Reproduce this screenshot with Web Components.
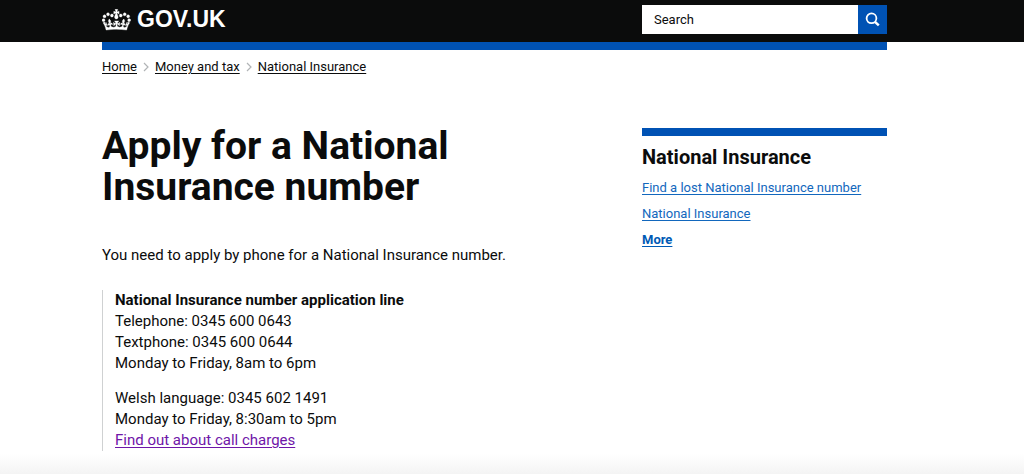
<!DOCTYPE html>
<html lang="en">
<head>
    <meta charset="UTF-8">
    <meta name="viewport" content="width=device-width, initial-scale=1.0">
    <title>Apply for a National Insurance number - GOV.UK</title>
    <style>
        body {
            margin: 0;
            color: #0b0c0c;
            background-color: #fff;
            font-family: Roboto, "Liberation Sans", sans-serif;
            --brand: #0052b4;
            --gutter-left: 102px;
            --gutter-right: 137px;
        }
    </style>
</head>
<body>
<govuk-page></govuk-page>
<script>
    class SiteSearch extends HTMLElement {
        constructor() {
            super();
            const shadow = this.attachShadow({ mode: 'open' });
            shadow.innerHTML = `
                <style>
                    :host { display: block; }
                    form { display: flex; height: 29px; }
                    input {
                        flex: 1;
                        min-width: 0;
                        box-sizing: border-box;
                        margin: 0;
                        padding: 0 12px;
                        border: 0;
                        border-radius: 0;
                        background-color: #fff;
                        color: #0b0c0c;
                        font: 13px Roboto, sans-serif;
                    }
                    input::placeholder { color: #0b0c0c; opacity: 1; }
                    button {
                        display: flex;
                        align-items: center;
                        justify-content: center;
                        width: 29px;
                        padding: 0;
                        border: 0;
                        background-color: var(--brand);
                        cursor: pointer;
                    }
                </style>
                <form role="search">
                    <input type="text" name="q" placeholder="Search" aria-label="Search">
                    <button type="submit" aria-label="Search GOV.UK">
                        <svg width="15" height="15" viewBox="0 0 15 15" fill="none" stroke="#fff">
                            <circle cx="6.5" cy="6.3" r="4.9" stroke-width="1.8"/>
                            <path d="M10 9.8 13.8 13.4" stroke-width="2.4"/>
                        </svg>
                    </button>
                </form>
            `;
        }
    }

    class SiteHeader extends HTMLElement {
        constructor() {
            super();
            const shadow = this.attachShadow({ mode: 'open' });
            shadow.innerHTML = `
                <style>
                    :host { display: block; }
                    header {
                        background-color: #0b0c0c;
                        padding: 5px var(--gutter-right) 8px var(--gutter-left);
                    }
                    .inner {
                        display: grid;
                        grid-template-columns: repeat(3, 1fr);
                        column-gap: 25px;
                        align-items: center;
                    }
                    a {
                        grid-column: span 2;
                        display: flex;
                        align-items: center;
                        gap: 6px;
                        color: #fff;
                        text-decoration: none;
                        font: bold 23px/29px "Liberation Sans", Arial, sans-serif;
                    }
                    .bar {
                        height: 8px;
                        margin: 0 var(--gutter-right) 0 var(--gutter-left);
                        background-color: var(--brand);
                    }
                </style>
                <header>
                    <div class="inner">
                        <a href="#">
                            <svg width="29" height="22" viewBox="0 4 36 27" fill="#fff" stroke="#fff" stroke-width=".4" aria-hidden="true">
                                <path d="M6.7 12.2c1 .4 2.1-.1 2.5-1s-.1-2.1-1-2.5c-1-.4-2.1.1-2.5 1-.4 1 0 2.1 1 2.5m-4.3 2.5c1 .4 2.1-.1 2.5-1s-.1-2.1-1-2.5c-1-.4-2.1.1-2.5 1-.5 1 0 2.1 1 2.5m-1.3 4.8c1 .4 2.1-.1 2.5-1 .4-1-.1-2.1-1-2.5-1-.4-2.1.1-2.5 1-.4 1 0 2.1 1 2.5m10.4-5.8c1 .4 2.1-.1 2.5-1s-.1-2.1-1-2.5c-1-.4-2.1.1-2.5 1s0 2.1 1 2.5m17.4-1.5c-1 .4-2.1-.1-2.5-1s.1-2.1 1-2.5c1-.4 2.1.1 2.5 1 .5 1 0 2.1-1 2.5m4.3 2.5c-1 .4-2.1-.1-2.5-1s.1-2.1 1-2.5c1-.4 2.1.1 2.5 1 .5 1 0 2.1-1 2.5m1.3 4.8c-1 .4-2.1-.1-2.5-1-.4-1 .1-2.1 1-2.5 1-.4 2.1.1 2.5 1 .4 1 0 2.1-1 2.5m-10.4-5.8c-1 .4-2.1-.1-2.5-1s.1-2.1 1-2.5c1-.4 2.1.1 2.5 1s0 2.1-1 2.5m-5.3-4.9 2.4 1.3V6.5l-2.4.8c-.1-.1-.1-.2-.2-.2s1-3 1-3h-3.4l1 3c-.1.1-.2.1-.2.2-.1.1-2.4-.7-2.4-.7v3.5L17 8.8c-.1.1 0 .2.1.3l-1.4 4.2c-.1.2-.1.4-.1.7 0 1.1.8 2.1 1.9 2.2h.6C19.2 16 20 15.1 20 14c0-.2 0-.4-.1-.7l-1.4-4.2c.2-.1.3-.2.3-.3m-1 20.3c4.6 0 8.9.3 12.8.9 1.1-4.6 2.4-7.2 3.8-9.1l-2.6-.9c.3 1.3.3 1.9 0 2.8-.4-.4-.8-1.2-1.1-2.4l-1.2 4.2c.8-.5 1.4-.9 2-.9-1.2 2.6-2.7 3.2-3.6 3-1.2-.2-1.7-1.3-1.5-2.2.3-1.3 1.6-1.6 2.2-.1 1.2-2.4-.8-3.1-2.1-2.4 1.9-1.9 2.2-3.6.6-5.7-2.2 1.7-2.2 3.3-1.2 5.6-1.3-1.5-3.3-.7-2.5 1.7.9-1.4 2.1-.5 2 .8-.2 1.2-1.7 2.1-3.7 2-2.8-.2-3-2.2-3-3.7.7-.1 1.9.5 3 2l.4-4.4c-1.1 1.2-2.2 1.4-3.3 1.4.4-1.2 2.1-3.1 2.1-3.1h-5.5s1.8 2 2.1 3.1c-1.1 0-2.2-.3-3.3-1.4l.4 4.4c1.1-1.5 2.3-2.1 3-2-.1 1.6-.2 3.5-3 3.7-1.9.2-3.5-.8-3.7-2-.2-1.3 1-2.2 1.9-.8.7-2.4-1.3-3.1-2.6-1.7 1-2.3 1-4-1.2-5.6-1.6 2.1-1.3 3.8.6 5.7-1.3-.7-3.2 0-2.1 2.4.6-1.5 1.9-1.1 2.2.1.2.9-.4 1.9-1.5 2.2-1 .2-2.4-.5-3.7-3 .6 0 1.2.4 2 .9L5 20.4c-.3 1.1-.7 1.9-1.2 2.4-.3-.8-.2-1.5 0-2.8l-2.6.9C2.7 22.8 4 25.4 5.1 30c3.8-.5 8.2-.9 12.7-.9"/>
                            </svg>
                            <span>GOV.UK</span>
                        </a>
                        <site-search></site-search>
                    </div>
                </header>
                <div class="bar"></div>
            `;
        }
    }

    class BreadCrumbs extends HTMLElement {
        constructor() {
            super();
            const shadow = this.attachShadow({ mode: 'open' });
            shadow.innerHTML = `
                <style>
                    :host { display: block; }
                    nav {
                        display: flex;
                        align-items: center;
                        gap: 5px;
                        font-size: 13px;
                        line-height: 16px;
                    }
                    ::slotted(a) {
                        color: #0b0c0c;
                        text-underline-offset: 2px;
                    }
                </style>
                <nav aria-label="Breadcrumb">
                    <slot name="first"></slot>
                    <svg width="8" height="10" viewBox="0 0 8 10" fill="none" stroke="#b1b4b6" stroke-width="1.2"><path d="M2 1l4 4-4 4"/></svg>
                    <slot name="second"></slot>
                    <svg width="8" height="10" viewBox="0 0 8 10" fill="none" stroke="#b1b4b6" stroke-width="1.2"><path d="M2 1l4 4-4 4"/></svg>
                    <slot name="third"></slot>
                </nav>
            `;
        }
    }

    class ContactBox extends HTMLElement {
        constructor() {
            super();
            const shadow = this.attachShadow({ mode: 'open' });
            shadow.innerHTML = `
                <style>
                    :host {
                        display: block;
                        border-left: 1px solid #cfd1d2;
                        padding-left: 12px;
                    }
                    ::slotted(p) { margin: 0 0 14px; }
                    ::slotted(p:last-child) { margin-bottom: 0; }
                </style>
                <slot></slot>
            `;
        }
    }

    class RelatedLinks extends HTMLElement {
        constructor() {
            super();
            const shadow = this.attachShadow({ mode: 'open' });
            shadow.innerHTML = `
                <style>
                    :host {
                        display: block;
                        margin-top: 2px;
                        border-top: 8px solid var(--brand);
                    }
                    h2 {
                        margin: 9px 0 11px;
                        font-size: 20px;
                        line-height: 24px;
                    }
                    ul {
                        display: grid;
                        gap: 10px;
                        margin: 0;
                        padding: 0;
                        list-style: none;
                        font-size: 13px;
                        line-height: 16px;
                    }
                    a { color: #1267bd; text-underline-offset: 2px; }
                    .more { color: #005ab5; font-weight: bold; }
                </style>
                <h2><slot></slot></h2>
                <ul>
                    <li><a href="#">Find a lost National Insurance number</a></li>
                    <li><a href="#">National Insurance</a></li>
                    <li><a class="more" href="#">More</a></li>
                </ul>
            `;
        }
    }

    class GovukPage extends HTMLElement {
        constructor() {
            super();
            const shadow = this.attachShadow({ mode: 'open' });
            shadow.innerHTML = `
                <style>
                    :host {
                        display: flex;
                        flex-direction: column;
                        min-height: 100vh;
                    }
                    .content { padding: 9px var(--gutter-right) 0 var(--gutter-left); }
                    .columns {
                        display: grid;
                        grid-template-columns: repeat(3, 1fr);
                        column-gap: 25px;
                        align-items: start;
                        margin-top: 51px;
                    }
                    main {
                        grid-column: span 2;
                        font-size: 15px;
                        line-height: 21px;
                    }
                    h1 {
                        max-width: 400px;
                        margin: 0 0 37px;
                        font-size: 39px;
                        line-height: 41px;
                    }
                    .intro { margin: 0 0 24px; }
                    .charges { color: #6f16a8; text-underline-offset: 2px; }
                    .fade {
                        height: 20px;
                        margin-top: auto;
                        background: linear-gradient(#fff, #f4f4f4);
                    }
                </style>
                <site-header></site-header>
                <div class="content">
                    <bread-crumbs>
                        <a slot="first" href="#">Home</a>
                        <a slot="second" href="#">Money and tax</a>
                        <a slot="third" href="#">National Insurance</a>
                    </bread-crumbs>
                    <div class="columns">
                        <main>
                            <h1>Apply for a National Insurance number</h1>
                            <p class="intro">You need to apply by phone for a National Insurance number.</p>
                            <contact-box>
                                <p>
                                    <strong>National Insurance number application line</strong><br>
                                    Telephone: 0345 600 0643<br>
                                    Textphone: 0345 600 0644<br>
                                    Monday to Friday, 8am to 6pm
                                </p>
                                <p>
                                    Welsh language: 0345 602 1491<br>
                                    Monday to Friday, 8:30am to 5pm<br>
                                    <a class="charges" href="#">Find out about call charges</a>
                                </p>
                            </contact-box>
                        </main>
                        <related-links>National Insurance</related-links>
                    </div>
                </div>
                <div class="fade"></div>
            `;
        }
    }

    customElements.define('site-search', SiteSearch);
    customElements.define('site-header', SiteHeader);
    customElements.define('bread-crumbs', BreadCrumbs);
    customElements.define('contact-box', ContactBox);
    customElements.define('related-links', RelatedLinks);
    customElements.define('govuk-page', GovukPage);
</script>
</body>
</html>
